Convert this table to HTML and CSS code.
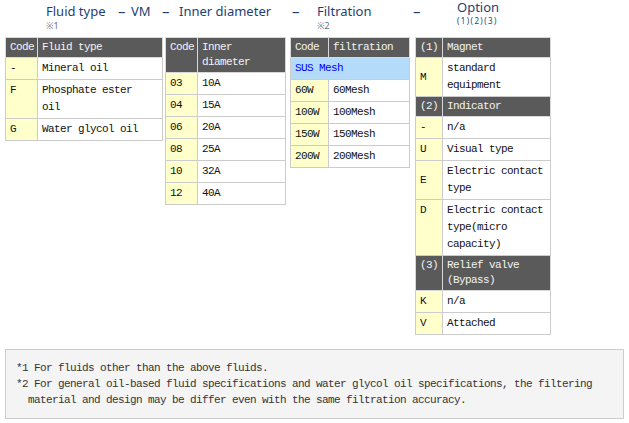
FILE: index.html
```html
<!DOCTYPE html>
<html>
<head>
<meta charset="utf-8">
<link rel="stylesheet" href="styles.css">
</head>
<body>
<div class="page">
  <div class="title">
    <div class="t-item w-fluid"><div class="t-main">Fluid type</div><div class="t-note">※1</div></div>
    <div class="t-item w-d1"><div class="t-main"><span class="dash">–</span></div></div>
    <div class="t-item w-vm"><div class="t-main">VM</div></div>
    <div class="t-item w-d2"><div class="t-main"><span class="dash">–</span></div></div>
    <div class="t-item w-inner"><div class="t-main">Inner diameter</div></div>
    <div class="t-item w-d3"><div class="t-main"><span class="dash">–</span></div></div>
    <div class="t-item w-filt"><div class="t-main">Filtration</div><div class="t-note">※2</div></div>
    <div class="t-item w-d4"><div class="t-main"><span class="dash">–</span></div></div>
    <div class="t-item t-option"><div class="t-main opt">Option</div><div class="t-sub">(1)(2)(3)</div></div>
  </div>

  <div class="tables">
    <table class="spec t1">
      <colgroup><col class="c1-code"><col></colgroup>
      <tr><th>Code</th><th>Fluid type</th></tr>
      <tr><td class="code">-</td><td>Mineral oil</td></tr>
      <tr><td class="code top">F</td><td>Phosphate ester<br>oil</td></tr>
      <tr><td class="code">G</td><td>Water glycol oil</td></tr>
    </table>

    <table class="spec t2">
      <colgroup><col class="c2-code"><col></colgroup>
      <tr><th class="top">Code</th><th>Inner<br>diameter</th></tr>
      <tr><td class="code">03</td><td>10A</td></tr>
      <tr><td class="code">04</td><td>15A</td></tr>
      <tr><td class="code">06</td><td>20A</td></tr>
      <tr><td class="code">08</td><td>25A</td></tr>
      <tr><td class="code">10</td><td>32A</td></tr>
      <tr><td class="code">12</td><td>40A</td></tr>
    </table>

    <table class="spec t3">
      <colgroup><col class="c3-code"><col></colgroup>
      <tr><th>Code</th><th>filtration</th></tr>
      <tr><td class="group" colspan="2">SUS Mesh</td></tr>
      <tr><td class="code">60W</td><td>60Mesh</td></tr>
      <tr><td class="code">100W</td><td>100Mesh</td></tr>
      <tr><td class="code">150W</td><td>150Mesh</td></tr>
      <tr><td class="code">200W</td><td>200Mesh</td></tr>
    </table>

    <table class="spec t4">
      <colgroup><col class="c4-code"><col></colgroup>
      <tr><th>(1)</th><th>Magnet</th></tr>
      <tr><td class="code">M</td><td>standard<br>equipment</td></tr>
      <tr><th>(2)</th><th>Indicator</th></tr>
      <tr><td class="code">-</td><td>n/a</td></tr>
      <tr><td class="code">U</td><td>Visual type</td></tr>
      <tr><td class="code">E</td><td>Electric contact<br>type</td></tr>
      <tr><td class="code top">D</td><td>Electric contact<br>type(micro<br>capacity)</td></tr>
      <tr><th class="top">(3)</th><th>Relief valve<br>(Bypass)</th></tr>
      <tr><td class="code">K</td><td>n/a</td></tr>
      <tr><td class="code">V</td><td>Attached</td></tr>
    </table>
  </div>

  <div class="notes">
    <p class="note">*1 For fluids other than the above fluids.</p>
    <p class="note">*2 For general oil-based fluid specifications and water glycol oil specifications, the filtering<br>material and design may be differ even with the same filtration accuracy.</p>
  </div>
</div>
</body>
</html>
```

FILE: styles.css
```css
html, body {
  margin: 0;
  padding: 0;
  background: #ffffff;
}

.page {
  padding: 0 5px;
  width: 619px;
}

/* ---------- title line ---------- */
.title {
  display: flex;
  align-items: flex-start;
  height: 37px;
  padding-left: 41px;
  box-sizing: border-box;
  color: #1f3f73;
  font-family: "Noto Sans", "Noto Sans CJK JP", sans-serif;
}

.t-item {
  flex: none;
  padding-top: 3px;
}

.t-main {
  font-size: 13px;
  line-height: 16px;
  white-space: nowrap;
}

.dash {
  font-size: 15px;
}

.t-note {
  margin-top: 2px;
  font-size: 9px;
  line-height: 10px;
  color: #6b7080;
  font-family: "Noto Sans", "Noto Sans CJK JP", sans-serif;
}

.w-fluid { width: 72px; }
.w-d1 { width: 13px; }
.w-vm { width: 31px; }
.w-d2 { width: 17px; }
.w-inner { width: 113px; }
.w-d3 { width: 25px; }
.w-filt { width: 96px; }
.w-d4 { width: 44px; }

.t-option {
  padding-top: 0;
}

.t-main.opt {
  line-height: 14px;
}

.t-sub {
  margin-top: 2px;
  font-size: 8px;
  line-height: 9px;
  letter-spacing: 1.4px;
}

/* ---------- tables ---------- */
.tables {
  display: flex;
  align-items: flex-start;
}

.spec {
  border-collapse: collapse;
  table-layout: fixed;
  font-family: "Liberation Mono", monospace;
  font-size: 11px;
  line-height: 17px;
  letter-spacing: -0.6px;
  color: #111111;
}

.spec td,
.spec th {
  border: 1px solid #cccccc;
  padding: 2px 2px 2px 4px;
  text-align: left;
  vertical-align: middle;
  font-weight: normal;
  white-space: nowrap;
}

.spec th {
  background: #5a5a5a;
  color: #f4f4f4;
  line-height: 15px;
  border-color: #d8d8d8;
}

.spec td.code {
  background: #ffffcc;
}

.spec td.group {
  background: #b4dcfa;
  color: #0000ff;
}

.spec .top {
  vertical-align: top;
}

.t1 { width: 158px; margin-right: 2px; }
.t2 { width: 121px; margin-right: 4px; }
.t3 { width: 120px; margin-right: 5px; }
.t4 { width: 136px; }

.c1-code { width: 32px; }
.c2-code { width: 32px; }
.c3-code { width: 38px; }
.c4-code { width: 27px; }

/* ---------- notes ---------- */
.notes {
  margin-top: 14px;
  border: 1px solid #cccccc;
  background: #f4f4f4;
  padding: 10px;
  font-family: "Liberation Mono", monospace;
  font-size: 11px;
  letter-spacing: -0.6px;
  line-height: 16px;
  color: #333333;
}

.note {
  margin: 0;
  padding-left: 12px;
  text-indent: -12px;
}
```
